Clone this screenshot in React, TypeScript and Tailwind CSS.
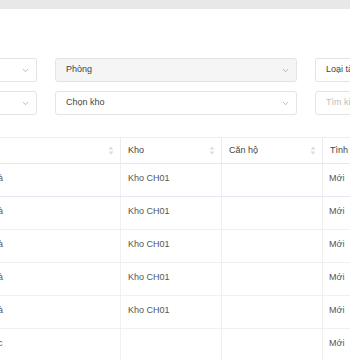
import { ChevronDown } from "lucide-react";

interface Row {
    name: string;
    kho: string;
    canHo: string;
    tinhTrang: string;
}

const rows: Row[] = [
    { name: "Thiết bị nhà", kho: "Kho CH01", canHo: "", tinhTrang: "Mới" },
    { name: "Thiết bị nhà", kho: "Kho CH01", canHo: "", tinhTrang: "Mới" },
    { name: "Thiết bị nhà", kho: "Kho CH01", canHo: "", tinhTrang: "Mới" },
    { name: "Thiết bị nhà", kho: "Kho CH01", canHo: "", tinhTrang: "Mới" },
    { name: "Thiết bị nhà", kho: "Kho CH01", canHo: "", tinhTrang: "Mới" },
    { name: "Thiết bị học", kho: "", canHo: "", tinhTrang: "Mới" },
];

function SortIcon() {
    return (
        <svg width="6" height="9" viewBox="0 0 6 9" className="shrink-0">
            <path d="M3 0.5 L5.5 3.5 L0.5 3.5 Z" fill="#dcdcdc" />
            <path d="M3 8.5 L5.5 5.5 L0.5 5.5 Z" fill="#dcdcdc" />
        </svg>
    );
}

function Select({ label, disabled, placeholder, noArrow }: { label?: string; disabled?: boolean; placeholder?: string; noArrow?: boolean }) {
    return (
        <div className={`w-[242px] h-6 shrink-0 rounded-[3px] border border-[#e3e3e3] flex items-center justify-between pl-[10px] pr-[6px] ${disabled ? "bg-[#f5f5f5]" : "bg-white"}`}>
            {label ? (
                <span className="text-[9px] text-[#444]">{label}</span>
            ) : (
                <span className="text-[9px] text-[#bdbdbd]">{placeholder}</span>
            )}
            {!noArrow && <ChevronDown size={9} strokeWidth={1.6} color="#8c8c8c" />}
        </div>
    );
}

function HeaderCell({ title, width, sort = true }: { title: string; width: string; sort?: boolean }) {
    return (
        <div className={`${width} shrink-0 h-full border-r border-[#ececf0] flex items-center justify-between pl-[7px] pr-[6px]`}>
            <span className="text-[9px] text-[#444]">{title}</span>
            {sort && <SortIcon />}
        </div>
    );
}

export default function App() {
    return (
        <div className="w-[350px] h-[360px] overflow-hidden bg-white font-['Liberation_Sans',Arial,sans-serif]">
            <div className="h-[9px] bg-[#e8e8e8]" />

            <div className="mt-[49px] -ml-[205px] flex flex-col gap-[9px]">
                <div className="flex gap-[18px]">
                    <Select label="" />
                    <Select label="Phòng" disabled />
                    <Select label="Loại tài sản" />
                </div>
                <div className="flex gap-[18px]">
                    <Select label="" />
                    <Select label="Chọn kho" />
                    <Select placeholder="Tìm kiếm" noArrow />
                </div>
            </div>

            <div className="mt-[22px] -ml-[52px]">
                <div className="flex h-[27px] border-y border-[#eeeeee] border-b-[#e6e6ee]">
                    <HeaderCell title="Tên" width="w-[173px]" />
                    <HeaderCell title="Kho" width="w-[101px]" />
                    <HeaderCell title="Căn hộ" width="w-[101px]" />
                    <HeaderCell title="Tình trạng" width="w-[100px]" />
                </div>
                {rows.map((row, i) => (
                    <div key={i} className={`flex h-[33px] border-b ${i === 0 ? "border-[#e6e6f4]" : "border-[#f0f0f0]"}`}>
                        <div className="w-[173px] shrink-0 border-r border-[#f0f0f0] flex items-center pl-[8px] pb-[3px]">
                            <span className="text-[9px] text-[#555]">{row.name}</span>
                        </div>
                        <div className="w-[101px] shrink-0 border-r border-[#f0f0f0] flex items-center pl-[7px] pb-[3px]">
                            <span className="text-[9px] text-[#555]">{row.kho}</span>
                        </div>
                        <div className="w-[101px] shrink-0 border-r border-[#f0f0f0] flex items-center pl-[7px] pb-[3px]">
                            <span className="text-[9px] text-[#555]">{row.canHo}</span>
                        </div>
                        <div className="w-[100px] shrink-0 flex items-center pl-[6px] pb-[3px]">
                            <span className="text-[9px] text-[#555]">{row.tinhTrang}</span>
                        </div>
                    </div>
                ))}
            </div>
        </div>
    );
}
